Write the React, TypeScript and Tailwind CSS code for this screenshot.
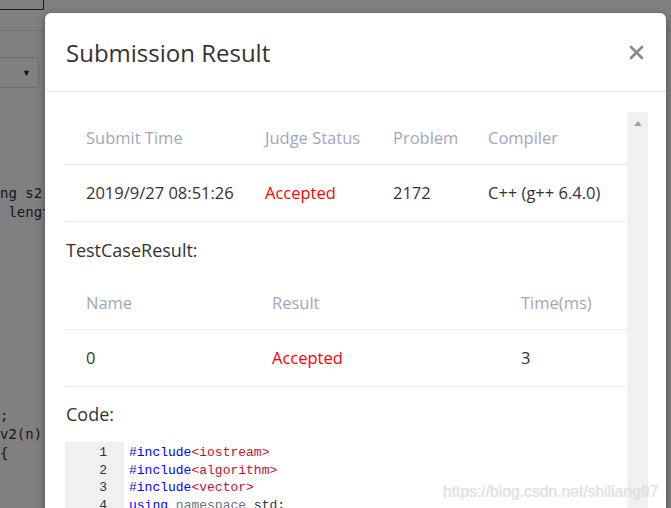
const sans = "font-['Segoe_UI','Open_Sans','Noto_Sans',sans-serif]"

const BgLine = ({ text }: { text: string }) => (
  <div className="h-[19px] leading-[19px] whitespace-pre text-[14px] text-[#161616] font-['DejaVu_Sans_Mono',monospace]">
    {text}
  </div>
)

const Cell = ({ children, w, className = "" }: { children: React.ReactNode; w: string; className?: string }) => (
  <div className={`${w} pl-[21px] shrink-0 ${className}`}>{children}</div>
)

const App = () => {
  return (
    <div className="relative w-[671px] h-[508px] overflow-hidden bg-[#808080]">
      {/* page behind the overlay */}
      <div className="h-[31px] border-b border-[#737373]">
        <div className="w-[44px] h-[10px] border border-[#1a1a1a] border-t-0 border-l-0"></div>
      </div>
      <div className="mt-[26px] w-[39px] h-[31px] border border-[#6e6e6e] rounded-r-[3px] border-l-0 flex items-center justify-end pr-[7px]">
        <span className="text-[9px] text-[#111]">▼</span>
      </div>
      <div className="mt-[96px]">
        <BgLine text="ng s2)" />
        <BgLine text=" lengt" />
      </div>
      <div className="mt-[184px]">
        <BgLine text=";" />
        <BgLine text="v2(n)" />
        <BgLine text="{" />
      </div>

      {/* modal */}
      <div className={`absolute left-[45px] top-[13px] w-[621px] h-[530px] bg-white rounded-[6px] shadow-[0_3px_9px_rgba(0,0,0,0.4)] ${sans}`}>
        <div className="h-[79px] pl-[21px] pr-[22px] flex items-center justify-between border-b border-[#e5e5e5]">
          <h4 className="text-[24px] text-[#333] leading-none pt-[2px]">Submission Result</h4>
          <svg width="15" height="15" viewBox="0 0 15 15" className="mt-[1px]">
            <path d="M2 2 L13 13 M13 2 L2 13" stroke="#8a8a8a" strokeWidth="2.6" strokeLinecap="round" />
          </svg>
        </div>

        <div className="flex pt-[20px] pl-[20px]">
          <div className="w-[562px] text-[16.5px] text-[#333]">
            <div className="flex items-center h-[53px] border-b border-[#e8e8ee] text-[#9fa6bf]">
              <Cell w="w-[179px]">Submit Time</Cell>
              <Cell w="w-[128px]">Judge Status</Cell>
              <Cell w="w-[95px]">Problem</Cell>
              <Cell w="w-[160px]">Compiler</Cell>
            </div>
            <div className="flex items-center h-[57px] border-b border-[#e8e8ee]">
              <Cell w="w-[179px]">2019/9/27 08:51:26</Cell>
              <Cell w="w-[128px]" className="text-[#ff0000]">Accepted</Cell>
              <Cell w="w-[95px]">2172</Cell>
              <Cell w="w-[160px]">C++ (g++ 6.4.0)</Cell>
            </div>

            <div className="h-[56px] flex items-center pl-[1px] text-[18px]">TestCaseResult:</div>

            <div className="flex items-center h-[52px] border-b border-[#e8e8ee] text-[#9fa6bf]">
              <Cell w="w-[186px]">Name</Cell>
              <Cell w="w-[249px]">Result</Cell>
              <Cell w="w-[127px]">Time(ms)</Cell>
            </div>
            <div className="flex items-center h-[57px] border-b border-[#e8e8ee]">
              <Cell w="w-[186px]">0</Cell>
              <Cell w="w-[249px]" className="text-[#ff0000]">Accepted</Cell>
              <Cell w="w-[127px]">3</Cell>
            </div>

            <div className="h-[55px] flex items-center pl-[1px] text-[18px]">Code:</div>

            <div className="flex font-['Liberation_Mono',monospace] text-[13px] leading-[17.5px]">
              <div className="w-[59px] bg-[#f0f0f0] pt-[2px] pr-[17px] text-right text-[#333]">
                <div>1</div>
                <div>2</div>
                <div>3</div>
                <div>4</div>
              </div>
              <div className="pt-[2px] pl-[5px] whitespace-pre">
                <div><span className="text-[#0000ff]">#include</span><span className="text-[#c8102e]">&lt;iostream&gt;</span></div>
                <div><span className="text-[#0000ff]">#include</span><span className="text-[#c8102e]">&lt;algorithm&gt;</span></div>
                <div><span className="text-[#0000ff]">#include</span><span className="text-[#c8102e]">&lt;vector&gt;</span></div>
                <div><span className="text-[#0000ff]">using</span> <span className="text-[#6a737d]">namespace</span> std;</div>
              </div>
            </div>
          </div>

          <div className="w-[21px] h-[420px] bg-[#f0f0f0] flex justify-center pt-[9px]">
            <svg width="8" height="5" viewBox="0 0 8 5">
              <path d="M0 5 L4 0 L8 5 Z" fill="#a3a3a3" />
            </svg>
          </div>
        </div>
      </div>

      <div className="absolute left-[443px] top-[480px] text-[15.7px] text-[#e3e3e3] font-['Liberation_Sans',Arial,sans-serif] [text-shadow:0_0_1px_rgba(0,0,0,0.15)]">
        https://blog.csdn.net/shiliang97
      </div>
    </div>
  )
}

export default App
